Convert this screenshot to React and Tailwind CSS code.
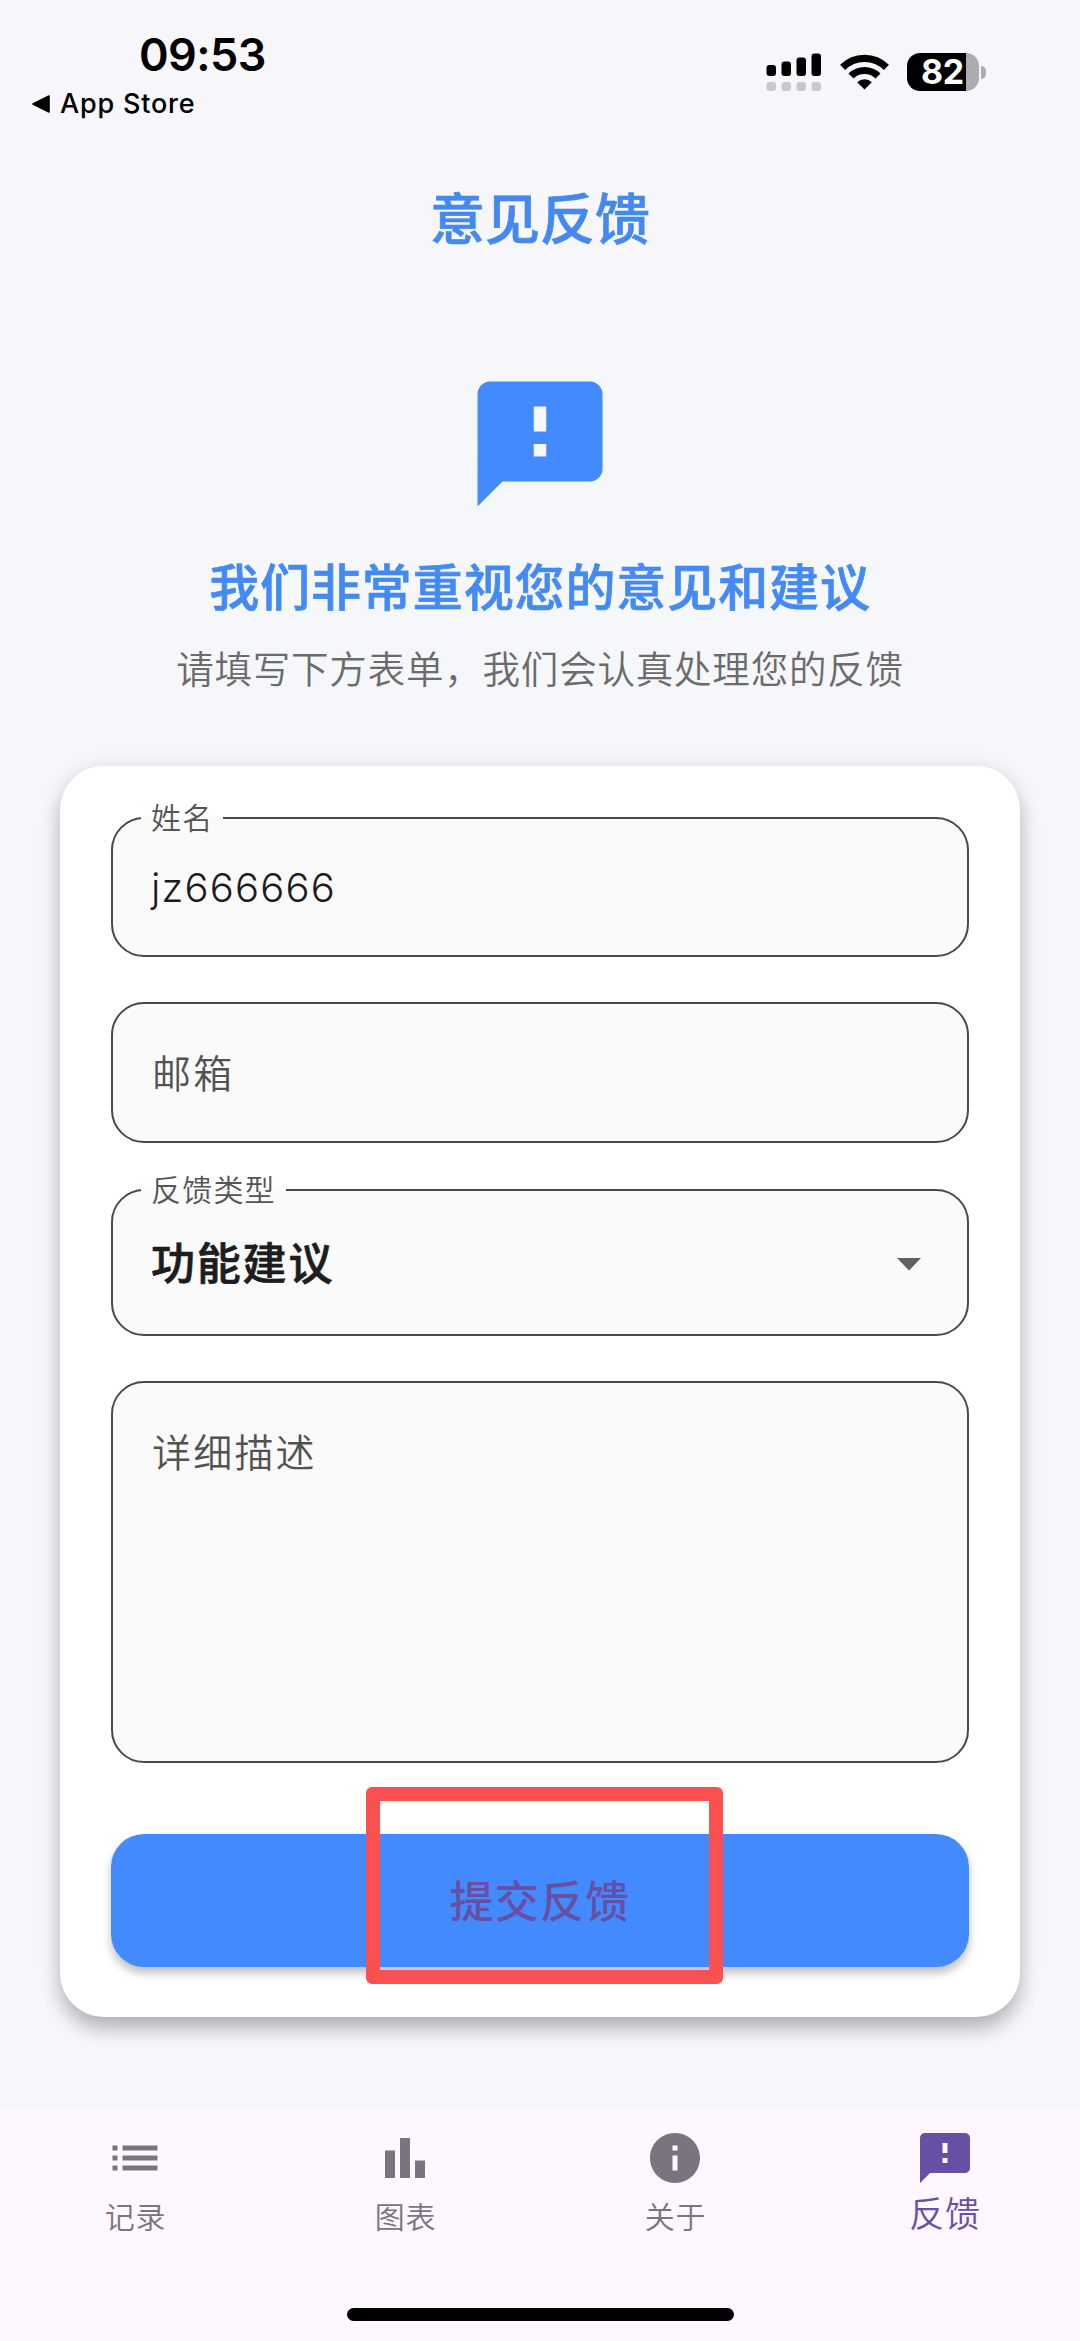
import React, { useState } from 'react';
import { MdFeedback, MdList, MdBarChart, MdInfo } from 'react-icons/md';

const tabs = [
    { id: 'records', label: '记录', Icon: MdList },
    { id: 'charts', label: '图表', Icon: MdBarChart },
    { id: 'about', label: '关于', Icon: MdInfo },
    { id: 'feedback', label: '反馈', Icon: MdFeedback },
];

const StatusBar = () => {
    return (
        <div className="flex justify-between h-[160px] pl-[31px] pr-[94px] text-black">
            <div className="flex flex-col pt-[31px]">
                <p className="pl-[108px] text-[45px] leading-[48px] font-semibold tracking-[-0.6px]">09:53</p>
                <div className="flex items-center gap-[10px] mt-[8px]">
                    <svg className="w-[19px] h-[18px]" viewBox="0 0 19 18">
                        <path d="M2 9L18 1V17Z" fill="currentColor" stroke="currentColor" strokeWidth="1.6" strokeLinejoin="round" />
                    </svg>
                    <p className="text-[27px] leading-[34px] font-medium tracking-[0.8px]">App Store</p>
                </div>
            </div>
            <div className="flex items-start pt-[53px]">
                <svg className="w-[56px] h-[39px]" viewBox="0 0 56 39">
                    <g fill="#000">
                        <rect x="0.5" y="12" width="9.5" height="11" rx="3" />
                        <rect x="15.5" y="8.5" width="9.5" height="14.5" rx="3" />
                        <rect x="30.5" y="4.5" width="9.5" height="18.5" rx="3" />
                        <rect x="45.5" y="0.5" width="9.5" height="22.5" rx="3" />
                    </g>
                    <g fill="#c9c9cc">
                        <rect x="0.5" y="29" width="9.5" height="9" rx="3" />
                        <rect x="15.5" y="29" width="9.5" height="9" rx="3" />
                        <rect x="30.5" y="29" width="9.5" height="9" rx="3" />
                        <rect x="45.5" y="29" width="9.5" height="9" rx="3" />
                    </g>
                </svg>
                <svg className="w-[49px] h-[38px] ml-[18px]" viewBox="0 0 49 38">
                    <g fill="none" stroke="#000" strokeWidth="7.2">
                        <path d="M2.6 14.4A31 31 0 0 1 46.4 14.4" />
                        <path d="M11 23A19.3 19.3 0 0 1 38 23" />
                    </g>
                    <path d="M24.5 36.5L17.2 29.2A10.4 10.4 0 0 1 31.8 29.2Z" fill="#000" />
                </svg>
                <div className="flex items-center ml-[18px] gap-[2px]">
                    <div className="flex items-center w-[72px] h-[38px] rounded-[13px] pl-[14px] bg-[linear-gradient(to_right,#000_59px,#acacb0_59px)]">
                        <span className="text-[34px] leading-[38px] font-bold text-white tracking-[-0.3px]">82</span>
                    </div>
                    <div className="w-[5px] h-[13px] rounded-r-full bg-[#acacb0]"></div>
                </div>
            </div>
        </div>
    )
}

const Field = ({ label, className, children }) => {
    return (
        <fieldset className={`flex items-start border-2 border-[#4a4a4a] rounded-[33px] bg-[#fafafa] pl-[28px] pr-[32px] ${className}`}>
            {label && (
                <legend className="px-[10px] text-[30px] leading-[4px] -mb-[2px] font-[350] tracking-[1.2px] text-[#555]">{label}</legend>
            )}
            {children}
        </fieldset>
    )
}

const App = () => {
    const [active, setActive] = useState('feedback');

    return (
        <div lang="zh-CN" className="flex flex-col w-[1080px] h-[2341px] bg-[#f5f7fb] overflow-hidden font-['Inter','Noto_Sans_CJK_SC',sans-serif]">
            <header className="h-[278px] bg-[#f7f6fb]">
                <StatusBar />
                <h1 className="mt-[19px] text-center text-[55px] leading-[80px] font-medium text-[#4489f0] [-webkit-text-stroke:0.7px_#4489f0]">意见反馈</h1>
            </header>

            <main className="flex flex-col items-center h-[1832px] px-[60px] pt-[91px]">
                <MdFeedback className="w-[150px] h-[150px] shrink-0 text-[#448aff]" />
                <h2 className="mt-[33px] text-[50px] leading-[72px] font-medium tracking-[0.9px] text-[#448af5] [-webkit-text-stroke:0.7px_#448af5]">我们非常重视您的意见和建议</h2>
                <p className="mt-[18px] text-[37.5px] leading-[56px] tracking-[0.8px] font-[350] text-[#6b6b6b]">请填写下方表单，我们会认真处理您的反馈</p>

                <form
                    className="flex flex-col w-full h-[1251px] mt-[68px] px-[51px] pt-[50px] bg-white rounded-[44px] shadow-[0_14px_20px_-2px_rgba(0,0,0,0.22),0_4px_24px_rgba(0,0,0,0.12)]"
                    onSubmit={(e) => e.preventDefault()}
                >
                    <Field label="姓名" className="h-[141px]">
                        <p className="pl-[10px] pt-[46px] text-[40px] leading-[48px] tracking-[1.2px] font-[350] text-[#1d1b20]">jz666666</p>
                    </Field>
                    <Field className="h-[141px] mt-[45px]">
                        <p className="pl-[11px] pt-[42px] text-[39px] leading-[56px] tracking-[2.2px] font-[350] text-[#525252]">邮箱</p>
                    </Field>
                    <Field label="反馈类型" className="h-[148px] mt-[45px]">
                        <div className="flex items-center justify-between w-full pt-[44px]">
                            <p className="pl-[10px] text-[44px] leading-[60px] tracking-[1.8px] font-medium text-[#1d1d1f] [-webkit-text-stroke:0.7px_#1d1d1f]">功能建议</p>
                            <svg className="w-[24px] h-[13px] mr-[14px]" viewBox="0 0 24 13">
                                <path d="M0 0h24L12 12.5z" fill="#616161" />
                            </svg>
                        </div>
                    </Field>
                    <Field className="h-[382px] mt-[45px]">
                        <p className="pl-[11px] pt-[42px] text-[39px] leading-[56px] tracking-[2.2px] font-[350] text-[#525252]">详细描述</p>
                    </Field>

                    <button
                        className="relative w-full h-[133px] mt-[71px] rounded-[33px] bg-[#448aff] pt-[2px] text-[44px] leading-[60px] tracking-[1.2px] font-medium text-[#6750a4] shadow-[0_6px_10px_rgba(0,0,0,0.26)]"
                        type="submit"
                    >
                        提交反馈
                        {/* marca roja sobre el boton */}
                        <span className="absolute left-[255px] -top-[47px] w-[357px] h-[197px] border-[14px] border-[#fb5050] rounded-[6px]"></span>
                    </button>
                </form>
            </main>

            <nav className="flex flex-col h-[231px] bg-[#fef7ff]">
                <div className="grid grid-cols-4 h-[198px] pt-[17.5px]">
                    {tabs.map(({ id, label, Icon }) => (
                        <button
                            key={id}
                            type="button"
                            className={`flex flex-col items-center ${active === id ? 'text-[#6750a4]' : 'text-[#79747e]'}`}
                            onClick={() => setActive(id)}
                        >
                            <Icon className="w-[60px] h-[60px]" />
                            <span className={active === id ? 'mt-[3px] text-[35px] leading-[46px] tracking-[0.8px] font-[350]' : 'mt-[7px] ml-[1px] text-[30px] leading-[44px] tracking-[0.8px] font-[350]'}>{label}</span>
                        </button>
                    ))}
                </div>
                <div className="w-[387px] h-[13px] mx-auto rounded-full bg-black"></div>
            </nav>
        </div>
    )
}

export default App;
